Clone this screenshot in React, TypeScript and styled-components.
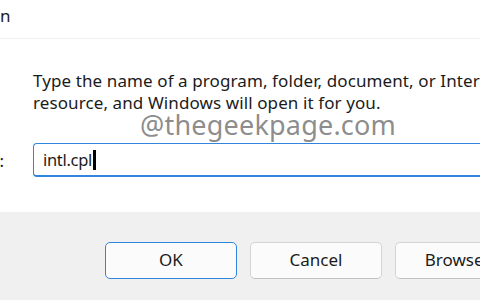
import React, { FC } from "react";
import styled, { createGlobalStyle } from "styled-components";

const GlobalStyle = createGlobalStyle`
  html, body {
    margin: 0;
    padding: 0;
    background: #ffffff;
    overflow: hidden;
  }
  * {
    box-sizing: border-box;
  }
`;

const DialogStyle = styled.div`
  width: 480px;
  height: 300px;
  display: flex;
  flex-direction: column;
  overflow: hidden;
  font-family: "Noto Sans", "Open Sans", sans-serif;
  color: #1b1b1b;
  background: #ffffff;
`;

const TitleBarStyle = styled.div`
  height: 39px;
  flex: none;
  display: flex;
  align-items: center;
  border-bottom: 1px solid #efefef;
`;

const TitleStyle = styled.div`
  margin-left: -21px;
  font-size: 17px;
  padding-bottom: 8px;
`;

const BodyStyle = styled.div`
  position: relative;
  flex: 1;
  display: flex;
  flex-direction: column;
  padding: 31px 0 0 33px;
`;

const MessageStyle = styled.div`
  font-size: 17px;
  line-height: 22px;
  white-space: nowrap;
  letter-spacing: 0.1px;
`;

const WatermarkStyle = styled.div`
  position: absolute;
  left: 140px;
  top: 67px;
  font-size: 27px;
  color: rgba(110, 110, 110, 0.8);
  letter-spacing: 0.2px;
  pointer-events: none;
`;

const InputRowStyle = styled.div`
  display: flex;
  align-items: center;
  margin-top: 29px;
  margin-left: -33px;
`;

const LabelStyle = styled.div`
  width: 33px;
  flex: none;
  display: flex;
  justify-content: flex-end;
  padding-right: 29px;
  font-size: 17px;
  white-space: nowrap;
`;

const InputBoxStyle = styled.div`
  flex: none;
  width: 480px;
  height: 34px;
  display: flex;
  align-items: center;
  padding-left: 9px;
  border: 1px solid #2f86dc;
  border-bottom: 2px solid #2f86dc;
  border-radius: 4px;
  font-size: 16.5px;
  letter-spacing: -0.3px;
`;

const CaretStyle = styled.span`
  display: inline-block;
  width: 3px;
  height: 20px;
  margin-left: 1px;
  background: #000000;
`;

const FooterStyle = styled.div`
  height: 88px;
  flex: none;
  background: #f0f0f0;
  display: flex;
  align-items: flex-start;
  padding: 30px 0 0 105px;
  gap: 13px;
`;

const ButtonStyle = styled.div<{ $primary?: boolean; $width: number }>`
  flex: none;
  width: ${p => p.$width}px;
  height: 37px;
  display: flex;
  align-items: center;
  justify-content: center;
  font-size: 17px;
  color: #1b1b1b;
  background: #fbfbfb;
  border-radius: 5px;
  border: ${p => (p.$primary ? "1.5px solid #2f86dc" : "1px solid #d4d4d4")};
  border-bottom-color: ${p => (p.$primary ? "#2f86dc" : "#c2c2c2")};
  padding-bottom: 2px;
`;

export const App: FC = () => {
  return <>
    <GlobalStyle />
    <DialogStyle>
      <TitleBarStyle>
        <TitleStyle>Run</TitleStyle>
      </TitleBarStyle>
      <BodyStyle>
        <MessageStyle>
          Type the name of a program, folder, document, or Internet<br />
          resource, and Windows will open it for you.
        </MessageStyle>
        <WatermarkStyle>@thegeekpage.com</WatermarkStyle>
        <InputRowStyle>
          <LabelStyle>Open:</LabelStyle>
          <InputBoxStyle>
            intl.cpl<CaretStyle />
          </InputBoxStyle>
        </InputRowStyle>
      </BodyStyle>
      <FooterStyle>
        <ButtonStyle $primary $width={132}>OK</ButtonStyle>
        <ButtonStyle $width={132}>Cancel</ButtonStyle>
        <ButtonStyle $width={132}>Browse...</ButtonStyle>
      </FooterStyle>
    </DialogStyle>
  </>;
};

export default App;
